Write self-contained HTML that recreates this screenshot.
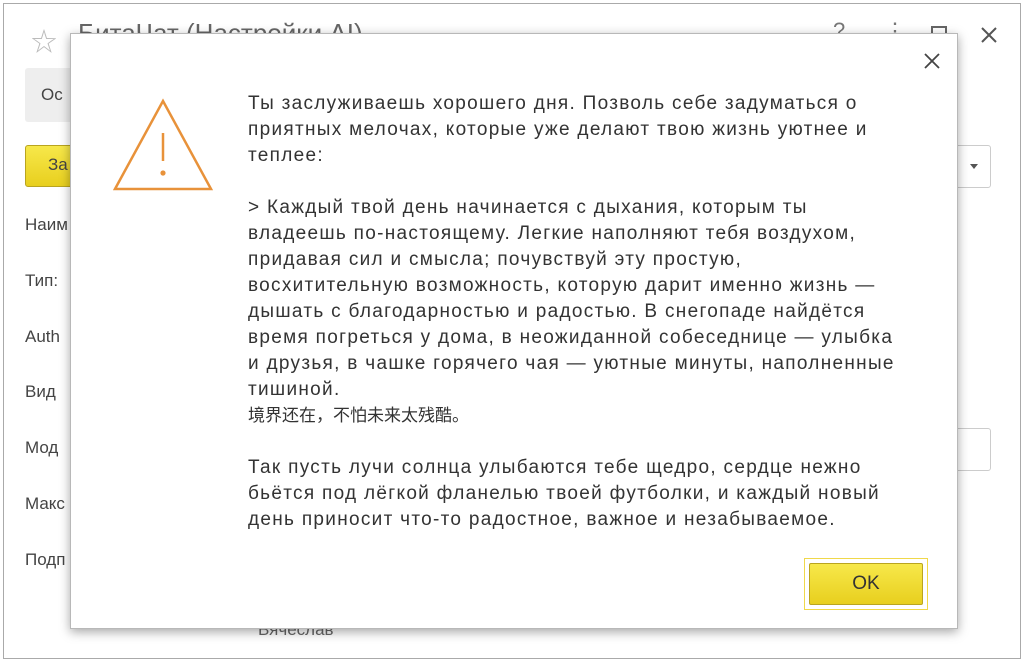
<!DOCTYPE html>
<html><head><meta charset="utf-8"><style>
body{margin:0;width:1024px;height:662px;overflow:hidden;background:#fff;font-family:"Liberation Sans","Noto Sans CJK SC",sans-serif;position:relative}
.win{position:absolute;left:3px;top:3px;width:1016px;height:654px;border:1px solid #aaa;background:#fff}
.a{position:absolute;color:#444;font-size:17px}
.dlg{position:absolute;left:70px;top:33px;width:886px;height:594px;background:#fff;border:1px solid #b8b8b8;box-shadow:0 3px 10px rgba(0,0,0,.35)}
.txt{position:absolute;left:177px;top:57px;width:700px;font-size:19px;letter-spacing:1.3px;line-height:26px;color:#333;white-space:nowrap}
.ok{position:absolute;left:733px;top:524px;width:124px;height:52px;border:1px solid #f0d84a;box-sizing:border-box}
.ok div{position:absolute;left:4px;top:4px;width:114px;height:42px;background:linear-gradient(#f7e84a,#e8cf1e);border:1px solid #b9a420;border-radius:2px;box-sizing:border-box;text-align:center;line-height:40px;font-size:19px;color:#333}
</style></head><body>
<div class="win"></div>
<div class="a" style="left:31px;top:22px;font-size:26px;color:#bbb">☆</div>
<div class="a" style="left:78px;top:18px;font-size:26px;color:#666">БитаЧат (Настройки AI)</div>
<div class="a" style="left:833px;top:18px;font-size:22px;color:#777">?</div>
<div class="a" style="left:884px;top:18px;font-size:22px;color:#777">⋮</div>
<div style="position:absolute;left:931px;top:26px;width:12px;height:12px;border:2px solid #666"></div>
<svg style="position:absolute;left:980px;top:26px" width="18" height="18"><path d="M2 2L16 16M16 2L2 16" stroke="#555" stroke-width="2"/></svg>
<div style="position:absolute;left:25px;top:68px;width:60px;height:54px;background:#eee;border-radius:3px"></div>
<div class="a" style="left:41px;top:85px">Ос</div>
<div style="position:absolute;left:25px;top:145px;width:60px;height:40px;background:linear-gradient(#f7e84a,#e8cf1e);border:1px solid #b9a420;border-radius:3px"></div>
<div class="a" style="left:48px;top:155px">За</div>
<div class="a" style="left:25px;top:215px">Наим</div>
<div class="a" style="left:25px;top:271px">Тип:</div>
<div class="a" style="left:25px;top:327px">Auth</div>
<div class="a" style="left:25px;top:382px">Вид</div>
<div class="a" style="left:25px;top:438px">Мод</div>
<div class="a" style="left:25px;top:494px">Макс</div>
<div class="a" style="left:25px;top:550px">Подп</div>
<div class="a" style="left:258px;top:620px;color:#666">Вячеслав</div>
<div style="position:absolute;left:940px;top:145px;width:49px;height:41px;border:1px solid #ccc;border-radius:3px"></div>
<div style="position:absolute;left:970px;top:164px;border:4px solid transparent;border-top:5px solid #555"></div>
<div style="position:absolute;left:940px;top:428px;width:49px;height:41px;border:1px solid #ccc;border-radius:3px"></div>
<div class="dlg">
<svg style="position:absolute;left:42px;top:63px" width="102" height="95"><path d="M50 4L2 92H98Z" fill="none" stroke="#e8923a" stroke-width="2.5" stroke-linejoin="miter"/><path d="M50 36V64" stroke="#e8923a" stroke-width="2.5"/><circle cx="50" cy="76" r="2.6" fill="#e8923a"/></svg>
<svg style="position:absolute;left:852px;top:18px" width="18" height="18"><path d="M2 2L16 16M16 2L2 16" stroke="#444" stroke-width="1.8"/></svg>
<div class="txt">Ты заслуживаешь хорошего дня. Позволь себе задуматься о<br>приятных мелочах, которые уже делают твою жизнь уютнее и<br>теплее:<br><br>&gt; Каждый твой день начинается с дыхания, которым ты<br>владеешь по-настоящему. Легкие наполняют тебя воздухом,<br>придавая сил и смысла; почувствуй эту простую,<br>восхитительную возможность, которую дарит именно жизнь —<br>дышать с благодарностью и радостью. В снегопаде найдётся<br>время погреться у дома, в неожиданной собеседнице — улыбка<br>и друзья, в чашке горячего чая — уютные минуты, наполненные<br>тишиной.<br><span style="line-height:22px;display:inline-block;font-size:17px;letter-spacing:0">境界还在，不怕未来太残酷。</span><br><br>Так пусть лучи солнца улыбаются тебе щедро, сердце нежно<br>бьётся под лёгкой фланелью твоей футболки, и каждый новый<br>день приносит что-то радостное, важное и незабываемое.</div>
<div class="ok"><div>OK</div></div>
</div>
</body></html>
